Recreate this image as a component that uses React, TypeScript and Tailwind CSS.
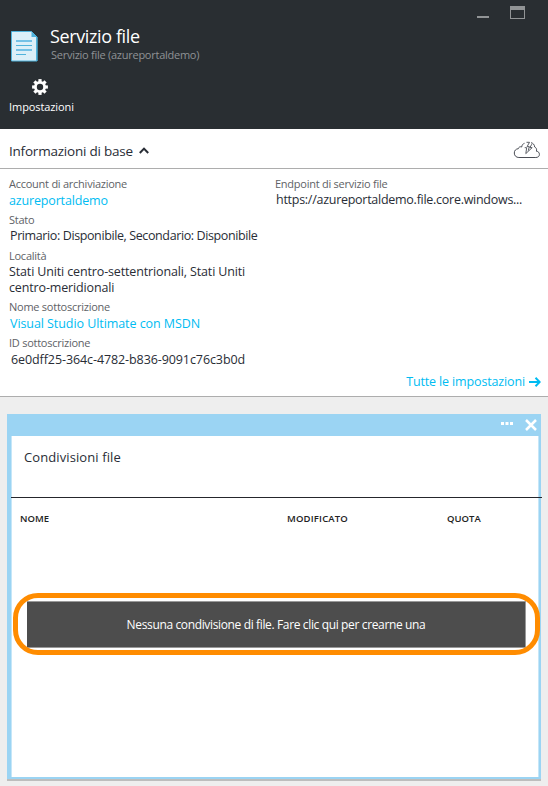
import type { ReactNode } from "react";

function Field({
  label,
  children,
  className,
}: {
  label: string;
  children: ReactNode;
  className: string;
}) {
  return (
    <div className={className}>
      <div className="h-4 text-[11px] leading-4 tracking-[-0.25px] text-[#606266]">{label}</div>
      {children}
    </div>
  );
}

function FileIcon() {
  return (
    <svg className="h-[31px] w-[28px] shrink-0" viewBox="0 0 28 31">
      <path d="M1.500.5h20L27 6v24H1.500z" fill="#dceff8" stroke="#50b3dc" />
      <path d="M26.700 6v24" stroke="#50b3dc" strokeWidth="1.400" />
      <path d="M21.500.5 27 6h-5.500z" fill="#50b3dc" />
      <path d="M6 10h16M6 19h16" stroke="#74c1e6" strokeWidth="2" />
      <path d="M6 14.500h16M6 23.500h10" stroke="#50b3dc" />
    </svg>
  );
}

function GearIcon() {
  return (
    <svg className="h-4 w-4" viewBox="-8 -8 16 16">
      <g fill="#fff">
        {[0, 45, 90, 135].map((a) => (
          <rect key={a} x="-1.600" y="-7.900" width="3.200" height="15.800" transform={`rotate(${a})`} />
        ))}
        <circle r="6" />
      </g>
      <circle r="3.200" fill="#292e32" />
    </svg>
  );
}

function CloudIcon() {
  return (
    <svg className="h-[18px] w-[27px]" viewBox="0 0 27 18" fill="none" stroke="#4a4d55">
      <path d="M11.500 2.300C9.900 2.700 8.900 4.200 8.700 6 7.200 5.300 5.500 6.200 5.300 7.700 2.900 7.900 1.300 9.500 1.300 12c0 2.700 1.900 4.500 4.600 4.500h16.900c2.200 0 3.600-1.200 3.600-3 0-1.900-1.100-3.100-2.900-3.200.4-2.200-.3-3.700-1.800-4.300-.2-2.400-1.700-3.900-3.700-4.300" />
      <path d="M13.500 1.300h3l-2.400 4.300h2.200l-1 4M11.700 6.700h2L12.800 12.600M18.800 3.200l-1.900 3.400h2.300l-6.400 6" strokeWidth=".9" />
    </svg>
  );
}

export default function App() {
  return (
    <div className="flex h-[786px] w-[548px] flex-col overflow-hidden bg-[#eeeeee] font-['Open_Sans','Noto_Sans',sans-serif] whitespace-nowrap text-[#292d36]">
      <header className="h-[129px] shrink-0 bg-[#292e32] text-white">
        <div className="flex h-[26px] items-start justify-end gap-[21px] pt-[6px] pr-[23px]">
          <div className="mt-[10px] h-[2px] w-3 bg-[#919496]" />
          <div className="h-[13px] w-[15px] border border-t-4 border-[#919496]" />
        </div>
        <div className="flex h-[38px] pl-[10px]">
          <div className="pt-[5px]">
            <FileIcon />
          </div>
          <div className="pl-3">
            <div className="h-[22px] text-[18px] leading-[20px]">
              <span className="tracking-[-0.38px]">Servizio file</span>
            </div>
            <div className="h-[14px] pl-[1px] text-[11px] leading-[14px] tracking-[-0.26px] text-[#8f9295]">
              <span>Servizio file (azureportaldemo)</span>
            </div>
          </div>
        </div>
        <div className="ml-[9px] flex w-[65px] flex-col items-center pt-[15px]">
          <div className="pr-[3px]">
            <GearIcon />
          </div>
          <span className="mt-1 text-[11px] leading-4 font-medium tracking-[-0.1px]">Impostazioni</span>
        </div>
      </header>

      <section className="h-[268px] shrink-0 border-b border-[#adadad] bg-white">
        <div className="flex h-10 items-center justify-between border-b border-[#adadad] pr-2 pl-[9px]">
          <div className="flex items-center gap-[6px] pt-[5px] text-[13.500px] leading-5">
            <span className="tracking-[-0.22px]">Informazioni di base</span>
            <svg className="mb-px h-[7px] w-[10px]" viewBox="0 0 10 7" fill="none" stroke="#292d36" strokeWidth="2">
              <path d="m.8 6 4.200-4.400L9.200 6" />
            </svg>
          </div>
          <div className="pt-[2px]">
            <CloudIcon />
          </div>
        </div>
        <div className="flex h-[203px] pt-[7px] pl-[9px] text-[12.500px] leading-4">
          <div className="w-[266px]">
            <Field label="Account di archiviazione" className="h-9">
              <div className="pt-px tracking-[-0.16px] text-[#00bcf2]">azureportaldemo</div>
            </Field>
            <Field label="Stato" className="h-9">
              <div className="pl-[1px] tracking-[-0.39px]">Primario: Disponibile, Secondario: Disponibile</div>
            </Field>
            <Field label="Località" className="h-[51px]">
              <div className="tracking-[-0.14px]">
                <span>Stati Uniti centro-settentrionali, Stati Uniti</span>
                <br />
                <span>centro-meridionali</span>
              </div>
            </Field>
            <Field label="Nome sottoscrizione" className="h-9">
              <div className="pt-px pl-[1px] tracking-[-0.07px] text-[#00bcf2]">
                Visual Studio Ultimate con MSDN
              </div>
            </Field>
            <Field label="ID sottoscrizione" className="h-9">
              <div className="pt-px pl-[2px] tracking-[-0.09px]">6e0dff25-364c-4782-b836-9091c76c3b0d</div>
            </Field>
          </div>
          <Field label="Endpoint di servizio file" className="h-9">
            <div className="pl-[1px] tracking-[-0.27px]">https://azureportaldemo.file.core.windows...</div>
          </Field>
        </div>
        <div className="flex h-5 items-center justify-end gap-1 pr-[7px] text-[12.500px] text-[#00bcf2]">
          <span className="tracking-[-0.14px]">Tutte le impostazioni</span>
          <svg className="h-[10px] w-3" viewBox="0 0 12 10" fill="none" stroke="#00bcf2" strokeWidth="2">
            <path d="M0 5h11M6.500.8 10.700 5 6.500 9.200" />
          </svg>
        </div>
      </section>

      <section className="mt-[17px] ml-[7px] flex h-[367px] w-[534px] shrink-0 flex-col border-b-2 border-[#bdbdbd] bg-[#9bd4f3]">
        <div className="flex h-[22px] shrink-0 items-center justify-end gap-[12.500px] pr-1">
          <svg className="mb-[3px] h-[3px] w-3" viewBox="0 0 12 3" fill="#fff">
            <path d="M0 0h3v3H0zM4.500 0h3v3h-3zM9 0h3v3H9z" />
          </svg>
          <svg className="mb-px h-3 w-3" viewBox="0 0 12 12" stroke="#fff" strokeWidth="2.500">
            <path d="m1 1 10 10M11 1 1 11" />
          </svg>
        </div>
        <div className="relative mr-[2px] ml-1 h-[341px] border-x border-[#c5e6f8] bg-white">
          <h2 className="h-[61px] pt-[11px] pl-3 text-[13px] leading-5">
            <span className="tracking-[0.1px]">Condivisioni file</span>
          </h2>
          <div className="-mr-[4px] -ml-px h-px bg-[#25262c]" />
          <div className="flex h-[42px] items-center pl-2 text-[9.500px] font-semibold text-[#222]">
            <span className="w-[267px]">NOME</span>
            <span className="w-[160px] tracking-[0.18px]">MODIFICATO</span>
            <span>QUOTA</span>
          </div>
          <button className="mt-[61px] ml-[15px] flex h-[47px] w-[499px] items-center justify-center border-y border-r border-[#999] bg-[#4d4d4d] text-[12px] text-white">
            <span className="tracking-[-0.36px]">Nessuna condivisione di file. Fare clic qui per crearne una</span>
          </button>
          <div className="pointer-events-none absolute top-[157px] left-[1px] h-[62px] w-[527px] rounded-[25px] border-5 border-[#ff8c00]" />
        </div>
      </section>
    </div>
  );
}
